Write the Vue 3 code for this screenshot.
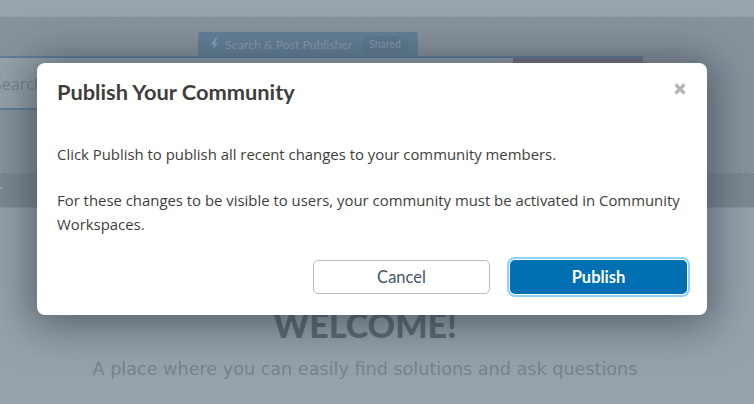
<script setup>
const paragraphs = [
  'Click Publish to publish all recent changes to your community members.',
  'For these changes to be visible to users, your community must be activated in Community Workspaces.'
]
</script>

<template>
  <div class="page">
    <div class="top"></div>
    <section class="hero">
      <div class="tab">
        <svg class="bolt" viewBox="0 0 10 14" width="9" height="12"><path d="M6 0 1 8h3l-1 6 6-8.500H5.500L8 0z" fill="#8a9eae" /></svg>
        <span class="tab-name">Search &amp; Post Publisher</span>
        <span class="tab-pill">Shared</span>
      </div>
      <div class="search">
        <div class="search-input">Search</div>
        <div class="search-btn"></div>
      </div>
      <div class="spacer"></div>
      <div class="caret-line"><span class="caret"></span></div>
    </section>
    <section class="welcome">
      <h2>WELCOME!</h2>
      <p>A place where you can easily find solutions and ask questions</p>
    </section>

    <div class="modal">
      <header class="modal-head">
        <h1>Publish Your Community</h1>
        <svg class="close" viewBox="0 0 12 12" width="12" height="12"><path d="M1.500 1.500l9 9m0-9l-9 9" stroke="#b5b5b5" stroke-width="3.200" /></svg>
      </header>
      <div class="modal-body">
        <p v-for="p in paragraphs" :key="p">{{ p }}</p>
      </div>
      <footer class="modal-foot">
        <button class="btn cancel">Cancel</button>
        <button class="btn publish">Publish</button>
      </footer>
    </div>
  </div>
</template>

<style>
html, body { margin: 0; overflow: hidden; }
</style>

<style scoped>
.page {
  position: relative;
  width: 754px;
  height: 404px;
  overflow: hidden;
  background: #96a2ab;
  font-family: "Open Sans", sans-serif;
}
.top {
  height: 17px;
  background: #98a4ad;
  border-bottom: 1px dashed #919da6;
  box-sizing: border-box;
}
.hero {
  height: 191px;
  background: #87939c;
  display: flex;
  flex-direction: column;
  box-sizing: border-box;
  padding-top: 15px;
  border-bottom: 1px dashed #8e9aa3;
}
.tab {
  margin-left: 198px;
  width: 220px;
  height: 24px;
  box-sizing: border-box;
  background: #628097;
  border-radius: 3px 3px 0 0;
  display: flex;
  align-items: center;
  padding-left: 12px;
  gap: 6px;
  color: #8a9eae;
  font: 12.200px "Lato", sans-serif;
}
.tab-pill {
  margin-left: 3px;
  font-size: 10.500px;
  padding: 2px 8px;
  border-radius: 9px;
  background: #5f7b91;
}
.search {
  display: flex;
  height: 54px;
  width: 643px;
  border-top: 2px solid #5f7f9a;
  border-bottom: 2px solid #5f7f9a;
  box-sizing: border-box;
  background: #96a2ab;
}
.search-input {
  flex: 1;
  margin-left: -7px;
  padding-top: 15px;
  font-size: 16px;
  color: #75838d;
}
.search-btn { width: 130px; background: #747480; }
.spacer { flex: 1; }
.caret-line {
  height: 35px;
  border-top: 1px dashed #8e9aa3;
  background: #7d8992;
  box-sizing: border-box;
  padding-top: 14px;
}
.caret {
  display: block;
  width: 0;
  border-left: 4px solid transparent;
  border-right: 4px solid transparent;
  border-top: 3px solid #96a2ab;
  margin-left: -4px;
}
.welcome { text-align: center; padding: 97px 24px 0 0; }
.welcome h2 {
  margin: 0;
  font: 900 34px/40px "Lato", sans-serif;
  color: #5e6973;
}
.welcome p {
  margin: 12px 0 0;
  font: 17.600px/24px "DejaVu Sans", sans-serif;
  color: #76838d;
}
.modal {
  position: absolute;
  left: 37px;
  top: 63px;
  width: 670px;
  height: 252px;
  box-sizing: border-box;
  background: #fff;
  border-radius: 8px;
  box-shadow: 0 4px 40px 8px rgba(40, 50, 60, 0.55);
  display: flex;
  flex-direction: column;
  color: #3e3e3c;
}
.modal-head {
  display: flex;
  justify-content: space-between;
  padding: 15px 21px 0 20px;
}
.modal-head h1 {
  margin: 0;
  font: 700 21.800px/28px "Lato", sans-serif;
}
.close { margin-top: 5px; }
.modal-body {
  padding: 36px 20px 0;
  font-size: 14.900px;
  line-height: 24px;
}
.modal-body p { margin: 0 0 22px; }
.modal-foot {
  margin-top: auto;
  display: flex;
  justify-content: flex-end;
  gap: 20px;
  padding: 0 20px 21px;
}
.btn {
  height: 34px;
  border-radius: 5px;
  font: 16.500px "Lato", sans-serif;
}
.cancel {
  width: 177px;
  background: #fff;
  border: 1px solid #b8bdc2;
  color: #43566b;
}
.publish {
  width: 177px;
  background: #0070b3;
  border: 0;
  color: #fff;
  font-weight: 700;
  box-shadow: 0 0 0 1px #fff, 0 0 0 3px #8fd0ff;
}
</style>
